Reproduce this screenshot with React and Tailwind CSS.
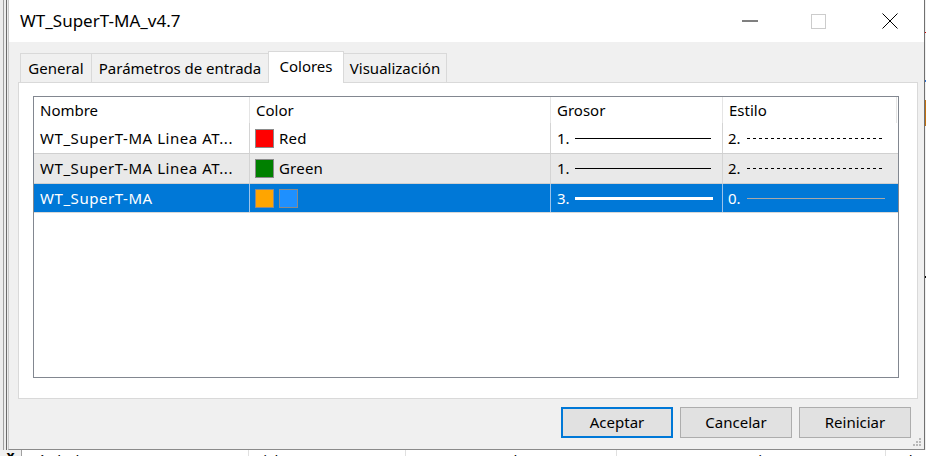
import React from 'react';

const rows = [
  {
    name: 'WT_SuperT-MA Linea AT...',
    swatches: ['#ff0000'],
    colorName: 'Red',
    width: '1.',
    stroke: 1,
    style: '2.',
    dashed: true,
    bg: 'bg-white',
  },
  {
    name: 'WT_SuperT-MA Linea AT...',
    swatches: ['#008000'],
    colorName: 'Green',
    width: '1.',
    stroke: 1,
    style: '2.',
    dashed: true,
    bg: 'bg-[#e9e9e9]',
  },
  {
    name: 'WT_SuperT-MA',
    swatches: ['#ffa500', '#1e90ff'],
    colorName: '',
    width: '3.',
    stroke: 3,
    style: '0.',
    dashed: false,
    selected: true,
    bg: 'bg-[#0078d7]',
  },
];

const LineSample = ({ w, stroke, color, dashed }) => (
  <svg width={w} height="9" className="block">
    <line
      x1="0"
      y1="4.5"
      x2={w}
      y2="4.5"
      stroke={color}
      strokeWidth={stroke}
      strokeDasharray={dashed ? '3 3' : undefined}
    />
  </svg>
);

const Row = ({ row, first }) => {
  const sel = row.selected;
  const text = sel ? 'text-white' : 'text-black';
  const sep = sel ? 'border-[#9cc3ea]' : 'border-[#d4d4d4]';
  return (
    <div
      className={`flex h-[30px] ${row.bg} ${text} ${first ? '' : 'border-t border-[#d0d0d0]'} ${sel ? 'border-b border-b-[#d8d8d8]' : ''}`}
    >
      <div className="w-[215px] flex items-center pl-[6px] whitespace-nowrap overflow-hidden tracking-[0.55px]">{row.name}</div>
      <div className={`w-[301px] flex items-center pl-[5px] border-l ${sep}`}>
        {row.swatches.map((c, i) => (
          <span
            key={i}
            className={`w-[19px] h-[19px] border border-[#8a8a8a] ${i > 0 ? 'ml-[5px]' : ''}`}
            style={{ backgroundColor: c }}
          />
        ))}
        {row.colorName && <span className="ml-[5px] tracking-[0.2px]">{row.colorName}</span>}
      </div>
      <div className={`w-[172px] flex items-center pl-[6px] border-l ${sep}`}>
        <span className="w-[18px]">{row.width}</span>
        <LineSample w={sel ? 138 : 136} stroke={row.stroke} color={sel ? '#ffffff' : '#000000'} />
      </div>
      <div className={`w-[175px] flex items-center pl-[5px] border-l ${sep}`}>
        <span className="w-[19px]">{row.style}</span>
        {row.dashed ? (
          <LineSample w={136} stroke={1} color="#000000" dashed />
        ) : (
          <LineSample w={138} stroke={1} color="#a8a8a8" />
        )}
      </div>
    </div>
  );
};

const Tab = ({ label, w, active, first }) => (
  <div
    className={`${w} flex items-center justify-center border-t border-l border-r border-[#d9d9d9] whitespace-nowrap ${
      first ? '' : 'ml-[-1px]'
    } ${active ? 'h-[32px] bg-white z-10 mb-[-1px] pb-[3px]' : 'h-[29px] bg-[#f0f0f0]'}`}
  >
    {label}
  </div>
);

const Button = ({ label, primary }) => (
  <button
    className={`w-[112px] h-[31px] bg-[#e1e1e1] text-black ${
      primary ? 'border-2 border-[#0078d7]' : 'border border-[#adadad]'
    }`}
  >
    {label}
  </button>
);

export default function App() {
  return (
    <div className="w-[926px] h-[456px] overflow-hidden bg-white font-['Noto_Sans','DejaVu_Sans',sans-serif] text-[15px] text-black flex flex-col">
      <div className="flex h-[450px]">
        {/* background strip left */}
        <div className="w-[8px] bg-[#ececec] flex">
          <div className="w-[3px]" />
          <div className="w-[1px] bg-[#a0a0a0]" />
          <div className="w-[2px]" />
          <div className="w-[1px] bg-[#6a6a6a]" />
        </div>

        {/* dialog */}
        <div className="w-[917px] flex flex-col border-l border-r border-b border-l-[#c8c8c8] border-r-[#707070] border-b-[#8a8a8a] bg-[#f0f0f0]">
          <div className="h-[42px] bg-white flex items-center shrink-0">
            <div className="pl-[11px] text-[17px] flex-1">WT_SuperT-MA_v4.7</div>
            <svg width="16" height="2" className="mr-[53px]">
              <line x1="0" y1="1" x2="16" y2="1" stroke="#000" strokeWidth="1" />
            </svg>
            <svg width="15" height="15" className="mr-[56px]">
              <rect x="0.5" y="0.5" width="14" height="14" fill="none" stroke="#cccccc" />
            </svg>
            <svg width="16" height="16" className="mr-[26px]">
              <path d="M0.5 0.5 L15.5 15.5 M15.5 0.5 L0.5 15.5" stroke="#000" strokeWidth="1" />
            </svg>
          </div>

          <div className="flex flex-col flex-1 pt-[9px]">
            <div className="flex items-end pl-[11px] relative">
              <Tab label="General" w="w-[72px]" first />
              <Tab label="Parámetros de entrada" w="w-[178px]" />
              <Tab label="Colores" w="w-[76px]" active />
              <Tab label="Visualización" w="w-[104px]" />
            </div>

            <div className="ml-[9px] mr-[6px] h-[317px] bg-white border border-[#d9d9d9] pt-[13px] pl-[14px] pr-[18px]">
              <div className="h-[282px] border border-[#828790] bg-white flex flex-col">
                <div className="flex h-[26px] shrink-0">
                  <div className="w-[215px] pl-[6px] flex items-center">Nombre</div>
                  <div className="w-[301px] pl-[6px] flex items-center border-l border-[#e5e5e5]">Color</div>
                  <div className="w-[172px] pl-[6px] flex items-center border-l border-[#e5e5e5]">Grosor</div>
                  <div className="w-[175px] pl-[6px] flex items-center border-l border-r border-[#e5e5e5]">Estilo</div>
                </div>
                {rows.map((r, i) => (
                  <Row key={i} row={r} first={i === 0} />
                ))}
              </div>
            </div>

            <div className="flex justify-end gap-[7px] pr-[13px] mt-[8px]">
              <Button label="Aceptar" primary />
              <Button label="Cancelar" />
              <Button label="Reiniciar" />
            </div>

            <div className="flex-1 flex justify-end items-end pr-[3px] pb-[3px]">
              <svg width="8" height="8">
                <rect x="6" y="0" width="2" height="2" fill="#b8b8b8" />
                <rect x="3" y="3" width="2" height="2" fill="#b8b8b8" />
                <rect x="6" y="3" width="2" height="2" fill="#b8b8b8" />
                <rect x="0" y="6" width="2" height="2" fill="#b8b8b8" />
                <rect x="3" y="6" width="2" height="2" fill="#b8b8b8" />
                <rect x="6" y="6" width="2" height="2" fill="#b8b8b8" />
              </svg>
            </div>
          </div>
        </div>

        {/* background strip right */}
        <div className="w-[1px] flex flex-col bg-[#f0f0f0]">
          <div className="h-[32px]" />
          <div className="h-[1px] bg-[#d00000]" />
          <div className="h-[47px]" />
          <div className="h-[2px] bg-[#3070d0]" />
          <div className="h-[18px]" />
          <div className="h-[26px] bg-[#c07010]" />
          <div className="h-[150px]" />
          <div className="h-[2px] bg-[#000]" />
        </div>
      </div>

      {/* content below dialog */}
      <div className="flex h-[6px] overflow-hidden bg-white">
        <div className="w-[22px] bg-[#f0f0f0] border-r border-[#a0a0a0] flex justify-center">
          <span className="font-bold text-[14px] leading-[14px] mt-[-1px]">x</span>
        </div>
        <div className="w-[227px] pl-[9px] leading-[15px] pt-[3px] border-r border-[#e0e0e0]">Símbolo</div>
        <div className="w-[157px] pl-[6px] leading-[15px] pt-[3px] border-r border-[#e0e0e0]">Tick</div>
        <div className="w-[211px] pl-[84px] leading-[15px] pt-[3px] border-r border-[#e0e0e0]">Fecha/Hora</div>
        <div className="w-[269px] pl-[133px] leading-[15px] pt-[3px] border-r border-[#e0e0e0]">Tiempo</div>
        <div className="flex-1 pl-[5px] leading-[15px] pt-[3px]">Vol</div>
      </div>
    </div>
  );
}
